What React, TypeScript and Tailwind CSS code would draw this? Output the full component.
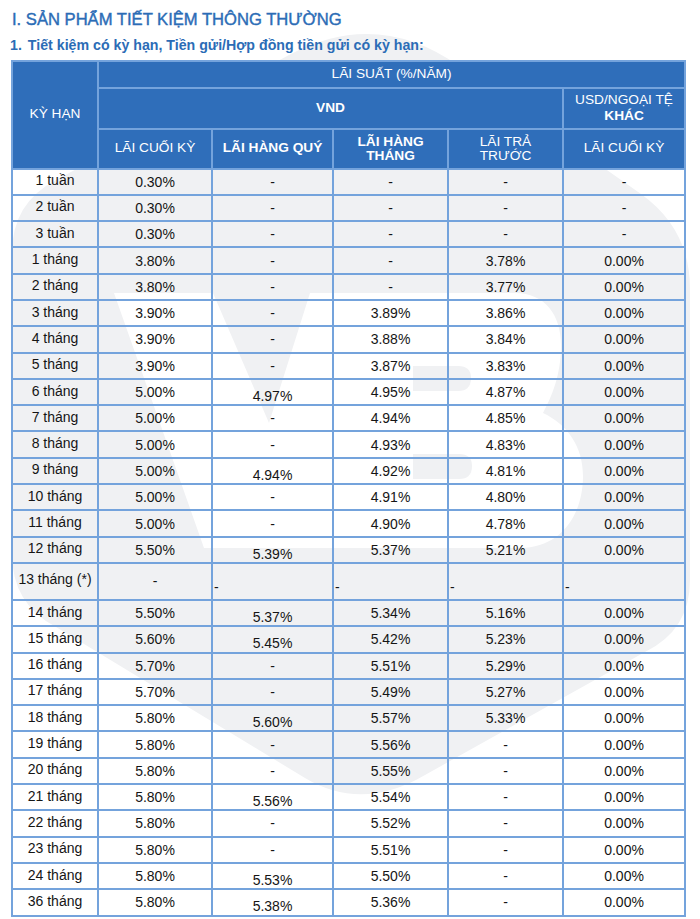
import React from 'react';

type Row = [string, string, string, string, string, string];

const rows: Row[] = [
  ['1 tuần', '0.30%', '-', '-', '-', '-'],
  ['2 tuần', '0.30%', '-', '-', '-', '-'],
  ['3 tuần', '0.30%', '-', '-', '-', '-'],
  ['1 tháng', '3.80%', '-', '-', '3.78%', '0.00%'],
  ['2 tháng', '3.80%', '-', '-', '3.77%', '0.00%'],
  ['3 tháng', '3.90%', '-', '3.89%', '3.86%', '0.00%'],
  ['4 tháng', '3.90%', '-', '3.88%', '3.84%', '0.00%'],
  ['5 tháng', '3.90%', '-', '3.87%', '3.83%', '0.00%'],
  ['6 tháng', '5.00%', '4.97%', '4.95%', '4.87%', '0.00%'],
  ['7 tháng', '5.00%', '-', '4.94%', '4.85%', '0.00%'],
  ['8 tháng', '5.00%', '-', '4.93%', '4.83%', '0.00%'],
  ['9 tháng', '5.00%', '4.94%', '4.92%', '4.81%', '0.00%'],
  ['10 tháng', '5.00%', '-', '4.91%', '4.80%', '0.00%'],
  ['11 tháng', '5.00%', '-', '4.90%', '4.78%', '0.00%'],
  ['12 tháng', '5.50%', '5.39%', '5.37%', '5.21%', '0.00%'],
];

const rowsAfter: Row[] = [
  ['14 tháng', '5.50%', '5.37%', '5.34%', '5.16%', '0.00%'],
  ['15 tháng', '5.60%', '5.45%', '5.42%', '5.23%', '0.00%'],
  ['16 tháng', '5.70%', '-', '5.51%', '5.29%', '0.00%'],
  ['17 tháng', '5.70%', '-', '5.49%', '5.27%', '0.00%'],
  ['18 tháng', '5.80%', '5.60%', '5.57%', '5.33%', '0.00%'],
  ['19 tháng', '5.80%', '-', '5.56%', '-', '0.00%'],
  ['20 tháng', '5.80%', '-', '5.55%', '-', '0.00%'],
  ['21 tháng', '5.80%', '5.56%', '5.54%', '-', '0.00%'],
  ['22 tháng', '5.80%', '-', '5.52%', '-', '0.00%'],
  ['23 tháng', '5.80%', '-', '5.51%', '-', '0.00%'],
  ['24 tháng', '5.80%', '5.53%', '5.50%', '-', '0.00%'],
  ['36 tháng', '5.80%', '5.38%', '5.36%', '-', '0.00%'],
];

const cell = 'border-2 border-[#74a3dc] text-center align-middle p-0 leading-[16px]';
const head = 'border-2 border-[#74a3dc] bg-[#2f6eba] text-white text-center align-middle p-0 uppercase text-[13.7px]';
const dashLow = 'border-2 border-[#74a3dc] align-bottom text-left pl-[1px] pb-[4px] leading-[16px]';

// light grey "VB" watermark behind the table
const Watermark = () => (
  <svg className="absolute inset-0" width="700" height="919" viewBox="0 0 700 919">
    <path
      fill="#f0f1f3"
      d="M12 253 Q12 203 56 180 L289 55 Q377 8 459 66 L641 194 Q690 229 690 289 L690 580 Q690 630 645 652 L425 775 Q362 812 305 778 L56 627 Q12 604 12 554 Z"
    />
    <path
      fill="#ffffff"
      d="M114 293 L213 293 L269 423 L310 293 L515 293 C545 293 561 315 561 345 C561 375 552 396 543 413 C568 425 583 447 583 476 C583 516 560 548 520 548 L204 548 Z"
    />
    <path fill="#f0f1f3" d="M413 366 L458 366 Q471 366 471 378 Q471 391 458 391 L413 391 Z" />
    <path fill="#f0f1f3" d="M413 454 L459 454 Q472 454 472 466 Q472 479 459 479 L413 479 Z" />
  </svg>
);

const BodyRow: React.FC<{ r: Row }> = ({ r }) => (
  <tr className="h-[26.3px]">
    <td className={`${cell} pb-[3px]`}>{r[0]}</td>
    <td className={cell}>{r[1]}</td>
    <td className={`${cell} ${r[2] === '-' ? '' : 'pt-[8px]'}`}>{r[2]}</td>
    <td className={cell}>{r[3]}</td>
    <td className={cell}>{r[4]}</td>
    <td className={cell}>{r[5]}</td>
  </tr>
);

export default function App() {
  return (
    <div
      className="relative w-[700px] h-[919px] bg-white overflow-hidden"
      style={{ fontFamily: '"Liberation Sans", Arial, sans-serif' }}
    >
      <Watermark />
      <div className="relative px-[10px] pt-[10px]">
        <h1 className="pl-[2px] text-[16.6px] leading-[20px] text-[#2b6cb6] [-webkit-text-stroke:0.4px_#2b6cb6]">
          I. SẢN PHẨM TIẾT KIỆM THÔNG THƯỜNG
        </h1>
        <h2 className="mt-[5.5px] text-[14.2px] leading-[18px] font-bold text-[#2b6cb6]">
          1.<span className="ml-[6px]">Tiết kiệm có kỳ hạn, Tiền gửi/Hợp đồng tiền gửi có kỳ hạn:</span>
        </h2>

        <table className="mt-[6px] ml-[1px] w-[673px] table-fixed border-collapse text-[14px] text-[#151515]">
          <colgroup>
            <col className="w-[86px]" />
            <col className="w-[114px]" />
            <col className="w-[121px]" />
            <col className="w-[115px]" />
            <col className="w-[115px]" />
            <col className="w-[122px]" />
          </colgroup>
          <thead>
            <tr className="h-[27px]">
              <th rowSpan={3} className={`${head} font-normal`}>KỲ HẠN</th>
              <th colSpan={5} className={`${head} font-normal`}>LÃI SUẤT (%/NĂM)</th>
            </tr>
            <tr className="h-[41px]">
              <th colSpan={4} className={`${head} font-bold`}>VND</th>
              <th className={`${head} font-normal leading-[16px]`}>
                USD/NGOẠI TỆ
                <br />
                <span className="font-bold">KHÁC</span>
              </th>
            </tr>
            <tr className="h-[40px]">
              <th className={`${head} font-normal`}>LÃI CUỐI KỲ</th>
              <th className={`${head} font-bold`}>LÃI HÀNG QUÝ</th>
              <th className={`${head} font-bold leading-[14px]`}>
                LÃI HÀNG
                <br />
                THÁNG
              </th>
              <th className={`${head} font-normal leading-[14px]`}>
                LÃI TRẢ
                <br />
                TRƯỚC
              </th>
              <th className={`${head} font-normal`}>LÃI CUỐI KỲ</th>
            </tr>
          </thead>
          <tbody>
            {rows.map((r) => (
              <BodyRow key={r[0]} r={r} />
            ))}
            <tr className="h-[37px]">
              <td className={`${cell} pb-[5px]`}>13 tháng (*)</td>
              <td className={cell}>-</td>
              <td className={dashLow}>-</td>
              <td className={dashLow}>-</td>
              <td className={dashLow}>-</td>
              <td className={dashLow}>-</td>
            </tr>
            {rowsAfter.map((r) => (
              <BodyRow key={r[0]} r={r} />
            ))}
          </tbody>
        </table>
      </div>
    </div>
  );
}
